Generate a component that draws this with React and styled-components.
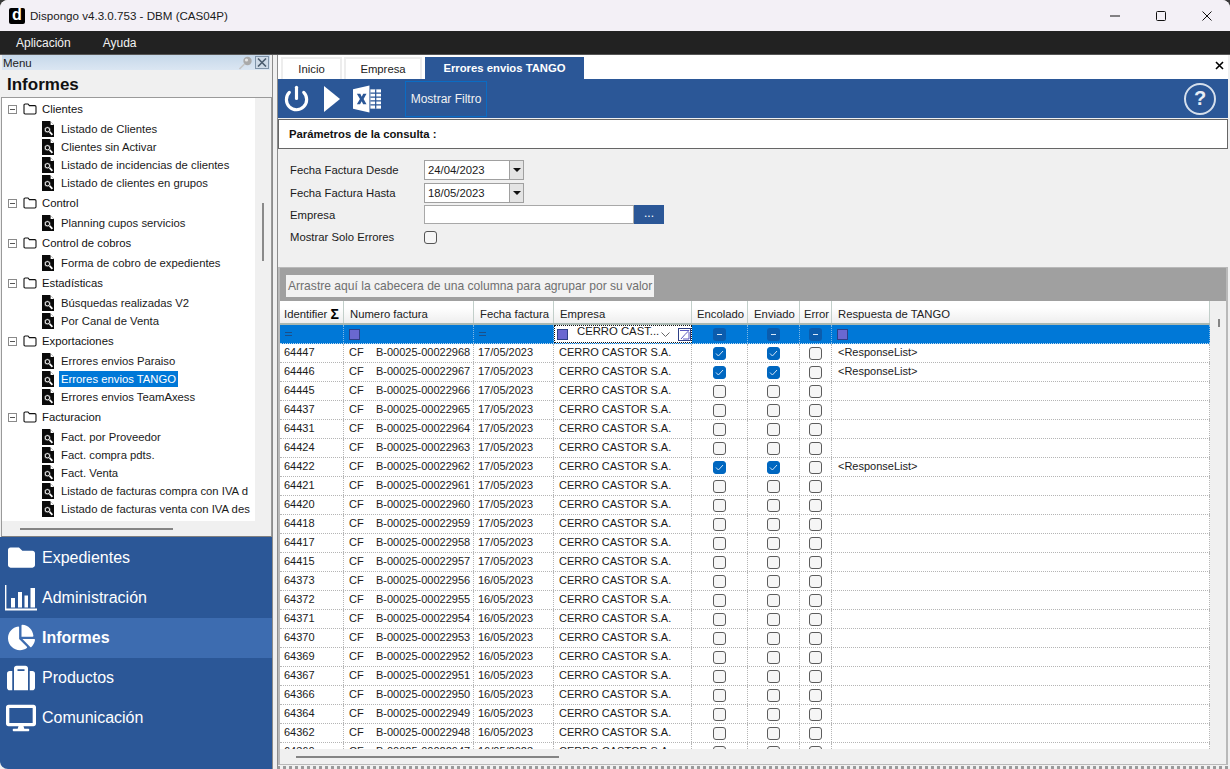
import React from 'react';
import styled, { createGlobalStyle } from 'styled-components';
import { FaFolder, FaChartPie, FaSuitcase, FaDesktop } from 'react-icons/fa';
import { Power } from 'lucide-react';

const GlobalStyle = createGlobalStyle`
  html, body {
    margin: 0;
    padding: 0;
    height: 100%;
    overflow: hidden;
    background: #3a3a3a;
  }
  * { box-sizing: border-box; }
  #root { height: 769px; }
`;

const COLUMNS = '64px 130px 80px 138px 56px 52px 32px 1fr';
const FONT = '"Liberation Sans", Arial, sans-serif';

const Window = styled.div`
  width: 1230px;
  height: 769px;
  display: flex;
  flex-direction: column;
  background: #f0f0f0;
  border-radius: 8px 8px 0 0;
  overflow: hidden;
  font-family: ${FONT};
  font-size: 11.3px;
  color: #1a1a1a;
`;

const TitleBar = styled.div`
  height: 31px;
  flex-shrink: 0;
  display: flex;
  align-items: center;
  padding-left: 9px;
  background: #f3f0f6;
`;

const Logo = styled.div`
  width: 16px;
  height: 16px;
  background: #000;
  color: #fff;
  border-radius: 2px;
  font-size: 16px;
  font-weight: 700;
  line-height: 14px;
  text-align: center;
`;

const AppTitle = styled.div`
  margin-left: 5px;
  font-size: 11.6px;
  flex: 1;
`;

const WinButton = styled.button`
  width: 46px;
  height: 31px;
  padding: 0;
  border: 0;
  background: none;
  display: flex;
  align-items: center;
  justify-content: center;
`;

const MenuBar = styled.div`
  height: 24px;
  flex-shrink: 0;
  display: flex;
  align-items: center;
  background: #222222;
  color: #f2f2f2;
  padding-left: 16px;
  gap: 32px;
  border-bottom: 1px solid #555;
`;

const MenuItem = styled.span`
  font-size: 12px;
`;

const Body = styled.div`
  flex: 1;
  min-height: 0;
  display: flex;
`;

const Sidebar = styled.aside`
  width: 273px;
  flex-shrink: 0;
  display: flex;
  flex-direction: column;
  border-right: 1px solid #8c8c8c;
`;

const DockCaption = styled.div`
  height: 15px;
  flex-shrink: 0;
  margin: 0 2px;
  display: flex;
  align-items: center;
  justify-content: space-between;
  padding: 0 1px;
  background: linear-gradient(#c6d8ea, #dbe6f2);
  font-size: 11.5px;
  color: #222;
`;

const DockTools = styled.div`
  display: flex;
  align-items: center;
  gap: 2px;
`;

const CloseBox = styled.span`
  width: 14px;
  height: 13px;
  border: 1px solid #7f93a8;
  background: #cfdbe8;
  display: flex;
  align-items: center;
  justify-content: center;
`;

const SectionTitle = styled.div`
  height: 27px;
  flex-shrink: 0;
  padding: 3px 0 0 7px;
  font-size: 17px;
  font-weight: 700;
  line-height: 24px;
  color: #111;
  background: #f0f0f0;
`;

const TreeBox = styled.div`
  flex: 1;
  min-height: 0;
  margin: 0 0 0 1px;
  border: 1px solid #9a9a9a;
  border-bottom: 1px solid #808080;
  display: grid;
  grid-template-columns: 1fr 16px;
  grid-template-rows: 1fr 15px;
  background: #f0f0f0;
`;

const Tree = styled.div`
  overflow: hidden;
  background: #fff;
`;

const GroupRow = styled.div`
  height: 22px;
  display: flex;
  align-items: center;
  padding-left: 6px;
  color: #111;
`;

const Expander = styled.span`
  width: 9px;
  height: 9px;
  flex-shrink: 0;
  border: 1px solid #8a8a8a;
  position: relative;
  margin-right: 6px;
  &::after {
    content: '';
    position: absolute;
    left: 1px;
    right: 1px;
    top: 3px;
    height: 1px;
    background: #555;
  }
`;

const GroupLabel = styled.span`
  margin-left: 5px;
`;

const LeafRow = styled.div`
  height: 18px;
  display: flex;
  align-items: center;
  padding-left: 39px;
`;

const LeafIcon = styled.span`
  width: 14px;
  flex-shrink: 0;
  display: flex;
`;

const LeafLabel = styled.span`
  margin-left: 4px;
  padding: 1px 2px;
  line-height: 14px;
  white-space: nowrap;
  color: ${p => (p.$selected ? '#fff' : '#1a1a1a')};
  background: ${p => (p.$selected ? '#0078d7' : 'transparent')};
`;

const VTrack = styled.div`
  display: flex;
  justify-content: center;
  padding-top: 105px;
  background: #f0f0f0;
`;

const VThumb = styled.div`
  width: 2px;
  height: 58px;
  background: #8a8a8a;
`;

const HTrack = styled.div`
  display: flex;
  align-items: center;
  padding-left: 18px;
  grid-column: 1 / span 2;
  background: #f0f0f0;
`;

const HThumb = styled.div`
  width: ${p => p.$w}px;
  height: 2px;
  background: #858585;
`;

const Nav = styled.nav`
  height: 232px;
  flex-shrink: 0;
  background: #2b5797;
  border-radius: 0 0 0 8px;
  padding-top: 1px;
`;

const NavItem = styled.div`
  height: 40px;
  display: flex;
  align-items: center;
  gap: 5px;
  padding: 0 0 1px 5px;
  color: #fff;
  font-size: 16px;
  font-weight: ${p => (p.$active ? 700 : 400)};
  background: ${p => (p.$active ? '#3d6cb0' : 'transparent')};
`;

const NavIcon = styled.span`
  width: 32px;
  height: 32px;
  flex-shrink: 0;
  display: flex;
  align-items: center;
  justify-content: center;
`;

const Main = styled.main`
  flex: 1;
  min-width: 0;
  margin: 0 2px 0 4px;
  display: flex;
  flex-direction: column;
  background: #f0f0f0;
  border-left: 1px solid #8c8c8c;
  border-bottom: 3px dotted #9a9a9a;
`;

const TabStrip = styled.div`
  height: 24px;
  flex-shrink: 0;
  display: flex;
  align-items: flex-end;
  gap: 2px;
  padding-left: 3px;
  background: #fff;
  position: relative;
`;

const Tab = styled.div`
  width: ${p => p.$w}px;
  height: 22px;
  margin-left: ${p => (p.$active ? 1 : 0)}px;
  display: flex;
  align-items: center;
  justify-content: center;
  font-weight: ${p => (p.$active ? 700 : 400)};
  color: ${p => (p.$active ? '#fff' : '#222')};
  background: ${p => (p.$active ? '#2b5797' : '#fff')};
  border: ${p => (p.$active ? '0' : '2px solid #ededed')};
  border-bottom: 0;
`;

const TabClose = styled.span`
  position: absolute;
  right: 4px;
  top: 6px;
  display: flex;
`;

const Toolbar = styled.div`
  height: 39px;
  flex-shrink: 0;
  display: flex;
  align-items: center;
  padding-left: 5px;
  background: #2b5797;
  color: #fff;
`;

const ToolIcon = styled.span`
  display: flex;
  align-items: center;
  justify-content: center;
  margin-right: ${p => p.$gap || 0}px;
`;

const FilterToggle = styled.button`
  width: 82px;
  height: 36px;
  margin-left: 24px;
  padding: 0;
  background: transparent;
  color: #f2f2f2;
  border: 1px solid #0a6cc4;
  font: 12px ${FONT};
`;

const HelpButton = styled.span`
  margin-left: auto;
  margin-right: 12px;
  width: 32px;
  height: 32px;
  border: 2px solid #d5dfec;
  border-radius: 50%;
  color: #e8eef6;
  display: flex;
  align-items: center;
  justify-content: center;
  font: 700 20px ${FONT};
`;

const ParamsHeader = styled.div`
  height: 30px;
  flex-shrink: 0;
  margin-top: 1px;
  padding-left: 10px;
  display: flex;
  align-items: center;
  background: #fff;
  border: 1px solid #666;
  font-weight: 700;
  color: #111;
`;

const Form = styled.div`
  height: 118px;
  flex-shrink: 0;
  padding: 10px 0 0 12px;
  display: grid;
  grid-template-columns: 134px 1fr;
  grid-auto-rows: 22.4px;
  align-items: center;
`;

const Field = styled.div`
  display: flex;
  align-items: center;
`;

const DateBox = styled.div`
  width: 100px;
  height: 20px;
  background: #fff;
  border: 1px solid #a0a0a0;
  display: flex;
  align-items: center;
  padding-left: 3px;
  justify-content: space-between;
`;

const DropArrow = styled.span`
  width: 14px;
  height: 18px;
  background: #e4e4e4;
  border-left: 1px solid #a0a0a0;
  display: flex;
  align-items: center;
  justify-content: center;
  &::after {
    content: '';
    border-left: 4px solid transparent;
    border-right: 4px solid transparent;
    border-top: 4px solid #111;
  }
`;

const TextBox = styled.div`
  width: 210px;
  height: 19px;
  background: #fff;
  border: 1px solid #a8a8a8;
`;

const BrowseButton = styled.button`
  width: 30px;
  height: 19px;
  padding: 0 0 3px;
  border: 0;
  background: #2b5797;
  color: #fff;
  font: 12px ${FONT};
`;

const PlainCheck = styled.span`
  width: 13px;
  height: 13px;
  border: 1px solid #555;
  border-radius: 3px;
  background: #f6f6f6;
`;

const Grid = styled.div`
  flex: 1;
  min-height: 0;
  margin-bottom: 1px;
  display: flex;
  flex-direction: column;
  border: 1px solid #b9b9b9;
  border-width: 1px 2px 1px 2px;
  overflow: hidden;
`;

const GroupPanel = styled.div`
  height: 33px;
  flex-shrink: 0;
  display: flex;
  align-items: center;
  padding-left: 6px;
  background: #a0a0a0;
`;

const GroupHint = styled.div`
  height: 22px;
  margin-top: 2px;
  padding: 0 2px;
  display: flex;
  align-items: center;
  background: #f2f2f2;
  color: #6f6f6f;
  font-size: 12.1px;
`;

const GridBody = styled.div`
  flex: 1;
  min-height: 0;
  display: grid;
  grid-template-columns: 930px 16px;
  grid-template-rows: 1fr 15px;
`;

const Rows = styled.div`
  overflow: hidden;
  background: #fff;
`;

const HeaderRow = styled.div`
  height: 24px;
  display: grid;
  grid-template-columns: ${COLUMNS};
  background: linear-gradient(#ffffff 30%, #eeeeee);
  border-bottom: 2px solid #a9b8b2;
`;

const HeaderCell = styled.div`
  display: flex;
  align-items: center;
  justify-content: ${p => (p.$center ? 'center' : 'space-between')};
  padding: 3px ${p => (p.$center ? 0 : 4)}px 0 ${p => (p.$center ? 2 : 6)}px;
  border-right: 1px solid #c2cfca;
  white-space: nowrap;
  color: #222;
  &:first-child { padding-left: 4px; }
`;

const SumSign = styled.b`
  font-size: 14px;
  line-height: 12px;
  color: #000;
`;

const FilterRow = styled.div`
  height: 19px;
  display: grid;
  grid-template-columns: ${COLUMNS};
  background: #0078d7;
  border-bottom: 1px dotted #bcd8f0;
`;

const FilterCell = styled.div`
  display: flex;
  align-items: center;
  justify-content: ${p => (p.$center ? 'center' : 'flex-start')};
  padding-left: ${p => (p.$center ? 0 : 5)}px;
  border-right: 1px dotted #7fb8e6;
`;

const EqualsSign = styled.span`
  width: 7px;
  height: 4px;
  border-top: 1px solid #1c4f88;
  border-bottom: 1px solid #1c4f88;
`;

const FilterSquare = styled.span`
  width: 11px;
  height: 11px;
  border: 1px solid #2d3f86;
  background: #6a68d0;
`;

const EditorCell = styled.div`
  display: flex;
  align-items: center;
  padding: 0 2px;
  background: #fff;
  border: 1px dotted #111;
`;

const EditorSquare = styled.span`
  width: 11px;
  height: 11px;
  flex-shrink: 0;
  border: 1px solid #2d3f86;
  background: #6a68d0;
  box-shadow: 0 0 0 1px #fff;
`;

const EditorText = styled.span`
  margin-left: 9px;
  width: 80px;
  flex-shrink: 0;
  line-height: 11px;
  margin-top: -5px;
  white-space: nowrap;
`;

const EditorChevron = styled.span`
  width: 16px;
  flex-shrink: 0;
  display: flex;
  justify-content: center;
`;

const EditorClear = styled.span`
  margin-left: 5px;
  display: flex;
`;

const DataRow = styled.div`
  height: 19px;
  display: grid;
  grid-template-columns: ${COLUMNS};
  border-bottom: 1px dotted #b5b5b5;
  font-size: 11px;
`;

const Cell = styled.div`
  display: flex;
  align-items: center;
  justify-content: ${p => (p.$center ? 'center' : 'flex-start')};
  padding-left: ${p => (p.$center ? 0 : p.$pad ?? 4)}px;
  padding-bottom: ${p => (p.$center ? 0 : 2)}px;
  border-right: 1px dotted #b5b5b5;
  white-space: nowrap;
  overflow: hidden;
`;

const InvoiceSerie = styled.span`
  width: 27px;
  flex-shrink: 0;
`;

const CheckBox = styled.span`
  width: 13px;
  height: 13px;
  border-radius: 3px;
  display: flex;
  align-items: center;
  justify-content: center;
  background: ${p => (p.$on ? '#0067c0' : '#f6f6f6')};
  border: 1px solid ${p => (p.$on ? '#0067c0' : '#5c5c5c')};
`;

const DashBox = styled.span`
  width: 13px;
  height: 13px;
  border-radius: 3px;
  background: #0b5cad;
  display: flex;
  align-items: center;
  justify-content: center;
  &::after {
    content: '';
    width: 5px;
    height: 1px;
    background: #d8e8f8;
  }
`;

const GridVTrack = styled.div`
  display: flex;
  justify-content: center;
  padding: 18px 0 0 1px;
  background: #f0f0f0;
`;

const GridVThumb = styled.div`
  width: 2px;
  height: 8px;
  background: #858585;
`;

const GridHTrack = styled.div`
  grid-column: 1 / span 2;
  display: flex;
  align-items: center;
  padding-left: 16px;
  background: #f0f0f0;
`;

const menuTree = [
  { name: 'Clientes', items: ['Listado de Clientes', 'Clientes sin Activar', 'Listado de incidencias de clientes', 'Listado de clientes en grupos'] },
  { name: 'Control', items: ['Planning cupos servicios'] },
  { name: 'Control de cobros', items: ['Forma de cobro de expedientes'] },
  { name: 'Estadísticas', items: ['Búsquedas realizadas V2', 'Por Canal de Venta'] },
  { name: 'Exportaciones', items: ['Errores envios Paraiso', 'Errores envios TANGO', 'Errores envios TeamAxess'] },
  { name: 'Facturacion', items: ['Fact. por Proveedor', 'Fact. compra pdts.', 'Fact. Venta', 'Listado de facturas compra con IVA d', 'Listado de facturas venta con IVA des'] },
];

// id, ultimo tramo de factura, fecha, con respuesta
const rows = [
  [64447, 968, 17, true], [64446, 967, 17, true], [64445, 966, 17], [64437, 965, 17],
  [64431, 964, 17], [64424, 963, 17], [64422, 962, 17, true], [64421, 961, 17],
  [64420, 960, 17], [64418, 959, 17], [64417, 958, 17], [64415, 957, 17],
  [64373, 956, 16], [64372, 955, 16], [64371, 954, 16], [64370, 953, 16],
  [64369, 952, 16], [64367, 951, 16], [64366, 950, 16], [64364, 949, 16],
  [64362, 948, 16], [64360, 947, 16],
];

const headers = [
  ['Identifier'], ['Numero factura'], ['Fecha factura'], ['Empresa'],
  ['Encolado', true], ['Enviado', true], ['Error', true], ['Respuesta de TANGO'],
];

function FolderOutline() {
  return (
    <svg width="14" height="12" viewBox="0 0 14 12" fill="none" stroke="#111" strokeWidth="1.1">
      <path d="M1 2.2Q1 1 2.2 1H5L6.4 2.6H11.8Q13 2.6 13 3.8V9.8Q13 11 11.8 11H2.2Q1 11 1 9.8Z" />
    </svg>
  );
}

function ReportIcon() {
  return (
    <svg width="14" height="16" viewBox="0 0 14 16">
      <path d="M1 0H9L13 4V16H1Z" fill="#0a0a0a" />
      <path d="M9.6 0.5L13 3.9H9.6Z" fill="#fff" />
      <circle cx="6.4" cy="8.8" r="3" fill="#fff" stroke="#0a0a0a" strokeWidth="0.6" />
      <circle cx="6.4" cy="8.8" r="1.7" fill="#0a0a0a" />
      <path d="M8.6 10.8L11.4 13.8" stroke="#fff" strokeWidth="1.7" />
    </svg>
  );
}

function BarsIcon() {
  return (
    <svg width="32" height="26" viewBox="0 0 32 26" fill="#fff">
      <path d="M0 0H1.4V23.6H32V25.4H0Z" />
      <rect x="6" y="13" width="4" height="9.5" />
      <rect x="13" y="7" width="4" height="15.5" />
      <rect x="19.5" y="10.5" width="3.5" height="12" />
      <rect x="25.5" y="3" width="4.5" height="19.5" />
    </svg>
  );
}

function ExcelIcon() {
  return (
    <svg width="28" height="28" viewBox="0 0 29 28">
      <path d="M0 4L17 0V28L0 24Z" fill="#fff" />
      <path d="M18 4H29V24H18Z" fill="#fff" />
      <path d="M4 8.5H7.6L9 11.6L10.6 8.5H14L11 14L14 19.5H10.5L9 16.4L7.3 19.5H4L7.2 14Z" fill="#2b5797" />
      <path d="M18 8H29M18 12H29M18 16H29M18 20H29M23.5 4V24" stroke="#2b5797" strokeWidth="1.3" />
    </svg>
  );
}

function SentCheck({ on }) {
  return (
    <CheckBox $on={on}>
      {on && (
        <svg width="9" height="7" viewBox="0 0 9 7" fill="none">
          <path d="M1 3.5L3.4 6L8 1" stroke="#cfe3f6" strokeWidth="1" />
        </svg>
      )}
    </CheckBox>
  );
}

function App() {
  return (
    <Window>
      <GlobalStyle />
      <TitleBar>
        <Logo>d</Logo>
        <AppTitle>Dispongo v4.3.0.753 - DBM (CAS04P)</AppTitle>
        <WinButton aria-label="Minimizar">
          <svg width="12" height="12" viewBox="0 0 12 12"><path d="M1 6H11" stroke="#111" strokeWidth="1" /></svg>
        </WinButton>
        <WinButton aria-label="Maximizar">
          <svg width="12" height="12" viewBox="0 0 12 12" fill="none"><rect x="1.5" y="1.5" width="9" height="9" rx="1" stroke="#111" /></svg>
        </WinButton>
        <WinButton aria-label="Cerrar">
          <svg width="12" height="12" viewBox="0 0 12 12"><path d="M1.5 1.5L10.5 10.5M10.5 1.5L1.5 10.5" stroke="#111" /></svg>
        </WinButton>
      </TitleBar>
      <MenuBar>
        <MenuItem>Aplicación</MenuItem>
        <MenuItem>Ayuda</MenuItem>
      </MenuBar>
      <Body>
        <Sidebar>
          <DockCaption>
            Menu
            <DockTools>
              <svg width="15" height="14" viewBox="0 0 15 14">
                <circle cx="9.5" cy="5" r="4.2" fill="#a9a9a9" />
                <circle cx="8.5" cy="4" r="1.6" fill="#e6e6e6" />
                <path d="M6.5 8L1.5 13" stroke="#c4c4c4" strokeWidth="1.6" />
              </svg>
              <CloseBox>
                <svg width="10" height="9" viewBox="0 0 10 9"><path d="M1 0.5L9 8.5M9 0.5L1 8.5" stroke="#4b5c6e" strokeWidth="1.6" /></svg>
              </CloseBox>
            </DockTools>
          </DockCaption>
          <SectionTitle>Informes</SectionTitle>
          <TreeBox>
            <Tree>
              {menuTree.map(group => (
                <React.Fragment key={group.name}>
                  <GroupRow>
                    <Expander />
                    <FolderOutline />
                    <GroupLabel>{group.name}</GroupLabel>
                  </GroupRow>
                  {group.items.map(item => (
                    <LeafRow key={item}>
                      <LeafIcon><ReportIcon /></LeafIcon>
                      <LeafLabel $selected={item === 'Errores envios TANGO'}>{item}</LeafLabel>
                    </LeafRow>
                  ))}
                </React.Fragment>
              ))}
            </Tree>
            <VTrack><VThumb /></VTrack>
            <HTrack><HThumb $w={153} /></HTrack>
          </TreeBox>
          <Nav>
            <NavItem><NavIcon><FaFolder size={27} color="#fff" /></NavIcon>Expedientes</NavItem>
            <NavItem><NavIcon><BarsIcon /></NavIcon>Administración</NavItem>
            <NavItem $active><NavIcon><FaChartPie size={27} color="#fff" /></NavIcon>Informes</NavItem>
            <NavItem><NavIcon><FaSuitcase size={28} color="#fff" /></NavIcon>Productos</NavItem>
            <NavItem><NavIcon><FaDesktop size={30} color="#fff" /></NavIcon>Comunicación</NavItem>
          </Nav>
        </Sidebar>
        <Main>
          <TabStrip>
            <Tab $w={61}>Inicio</Tab>
            <Tab $w={78}>Empresa</Tab>
            <Tab $w={159} $active>Errores envios TANGO</Tab>
            <TabClose>
              <svg width="9" height="9" viewBox="0 0 9 9"><path d="M1 1L8 8M8 1L1 8" stroke="#000" strokeWidth="1.6" /></svg>
            </TabClose>
          </TabStrip>
          <Toolbar>
            <ToolIcon $gap={14}><Power size={27} color="#fff" strokeWidth={2.8} /></ToolIcon>
            <ToolIcon $gap={13}>
              <svg width="16" height="26" viewBox="0 0 16 26"><path d="M0 0L16 13L0 26Z" fill="#fff" /></svg>
            </ToolIcon>
            <ToolIcon><ExcelIcon /></ToolIcon>
            <FilterToggle>Mostrar Filtro</FilterToggle>
            <HelpButton>?</HelpButton>
          </Toolbar>
          <ParamsHeader>Parámetros de la consulta :</ParamsHeader>
          <Form>
            <span>Fecha Factura Desde</span>
            <Field><DateBox>24/04/2023<DropArrow /></DateBox></Field>
            <span>Fecha Factura Hasta</span>
            <Field><DateBox>18/05/2023<DropArrow /></DateBox></Field>
            <span>Empresa</span>
            <Field><TextBox /><BrowseButton>...</BrowseButton></Field>
            <span>Mostrar Solo Errores</span>
            <Field><PlainCheck /></Field>
          </Form>
          <Grid>
            <GroupPanel>
              <GroupHint>Arrastre aquí la cabecera de una columna para agrupar por su valor</GroupHint>
            </GroupPanel>
            <GridBody>
              <Rows>
                <HeaderRow>
                  {headers.map(([label, center], i) => (
                    <HeaderCell key={label} $center={center}>
                      {label}
                      {i === 0 && <SumSign>Σ</SumSign>}
                    </HeaderCell>
                  ))}
                </HeaderRow>
                <FilterRow>
                  <FilterCell><EqualsSign /></FilterCell>
                  <FilterCell><FilterSquare /></FilterCell>
                  <FilterCell><EqualsSign /></FilterCell>
                  <EditorCell>
                    <EditorSquare />
                    <EditorText>CERRO CAST...</EditorText>
                    <EditorChevron>
                      <svg width="9" height="5" viewBox="0 0 9 5" fill="none"><path d="M0.5 0.5L4.5 4.5L8.5 0.5" stroke="#666" /></svg>
                    </EditorChevron>
                    <EditorClear>
                      <svg width="13" height="13" viewBox="0 0 13 13" fill="none">
                        <rect x="0.5" y="0.5" width="12" height="12" stroke="#2d3f86" />
                        <path d="M2 2.5H11L7 6.5L3 11M11 4V11H5" stroke="#5a58c0" />
                      </svg>
                    </EditorClear>
                  </EditorCell>
                  <FilterCell $center><DashBox /></FilterCell>
                  <FilterCell $center><DashBox /></FilterCell>
                  <FilterCell $center><DashBox /></FilterCell>
                  <FilterCell><FilterSquare /></FilterCell>
                </FilterRow>
                {rows.map(([id, num, day, sent]) => (
                  <DataRow key={id}>
                    <Cell>{id}</Cell>
                    <Cell $pad={5}><InvoiceSerie>CF</InvoiceSerie>B-00025-00022{num}</Cell>
                    <Cell $pad={4}>{day}/05/2023</Cell>
                    <Cell $pad={5}>CERRO CASTOR S.A.</Cell>
                    <Cell $center><SentCheck on={sent} /></Cell>
                    <Cell $center><SentCheck on={sent} /></Cell>
                    <Cell $center><SentCheck /></Cell>
                    <Cell $pad={6}>{sent ? '<ResponseList>' : ''}</Cell>
                  </DataRow>
                ))}
              </Rows>
              <GridVTrack><GridVThumb /></GridVTrack>
              <GridHTrack><HThumb $w={263} /></GridHTrack>
            </GridBody>
          </Grid>
        </Main>
      </Body>
    </Window>
  );
}

export default App;
